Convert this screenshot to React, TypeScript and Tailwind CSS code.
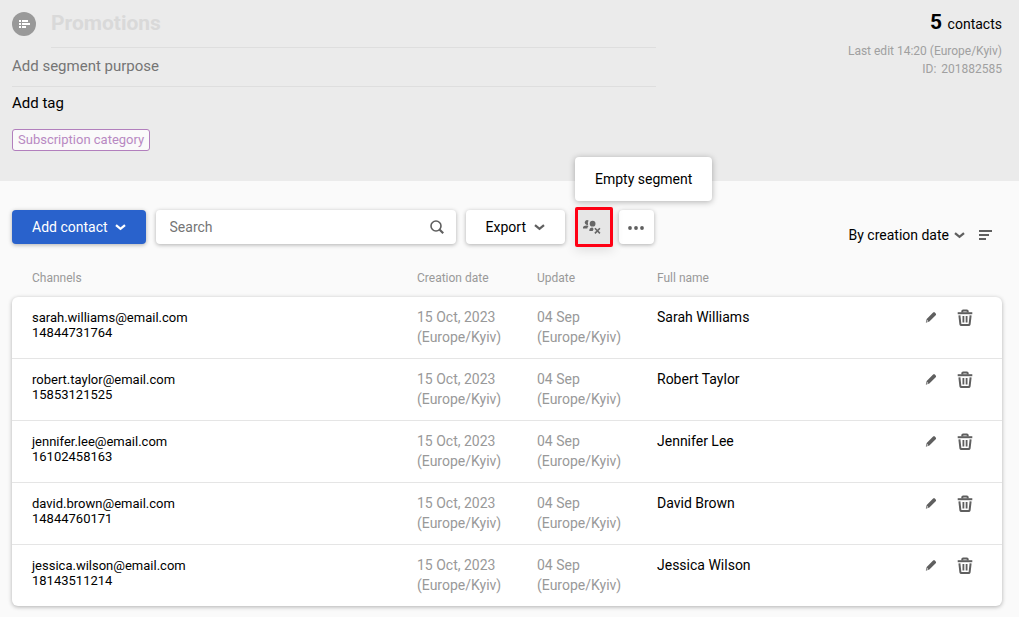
import React, { useState } from 'react';
import clsx from 'clsx';

interface Contact {
  id: number;
  email: string;
  phone: string;
  created: string;
  updated: string;
  name: string;
}

const contacts: Contact[] = [
  { id: 1, email: 'sarah.williams@email.com', phone: '14844731764', created: '15 Oct, 2023', updated: '04 Sep', name: 'Sarah Williams' },
  { id: 2, email: 'robert.taylor@email.com', phone: '15853121525', created: '15 Oct, 2023', updated: '04 Sep', name: 'Robert Taylor' },
  { id: 3, email: 'jennifer.lee@email.com', phone: '16102458163', created: '15 Oct, 2023', updated: '04 Sep', name: 'Jennifer Lee' },
  { id: 4, email: 'david.brown@email.com', phone: '14844760171', created: '15 Oct, 2023', updated: '04 Sep', name: 'David Brown' },
  { id: 5, email: 'jessica.wilson@email.com', phone: '18143511214', created: '15 Oct, 2023', updated: '04 Sep', name: 'Jessica Wilson' },
];

const ChevronIcon = () => (
  <svg viewBox="0 0 11 8" className="w-[11px] h-2" fill="none" stroke="currentColor" strokeWidth="2.3" aria-hidden="true">
    <path d="M1 2.2 L5.5 5.8 L10 2.2" />
  </svg>
);

const SegmentIcon = () => (
  <svg viewBox="0 0 24 24" className="w-6 h-6 shrink-0" aria-hidden="true">
    <circle cx="12" cy="12" r="12" fill="#999999" />
    <path fill="#fff" d="M7 8h2v2H7zM10 8h6v2h-6zM7 11h2v2H7zM10 11h8v2h-8zM7 14h2v2H7zM10 14h4v2h-4z" />
  </svg>
);

const SearchIcon = () => (
  <svg viewBox="0 0 14 14" className="w-3.5 h-3.5" fill="none" stroke="currentColor" aria-hidden="true">
    <circle cx="6" cy="6" r="5" strokeWidth="1.6" />
    <path d="M9.5 9.5 L13.2 13.2" strokeWidth="2.2" />
  </svg>
);

const EmptySegmentIcon = () => (
  <svg viewBox="0 0 18 16" className="w-[18px] h-4" fill="currentColor" aria-hidden="true">
    <path d="M5.6 1.6a2.4 2.4 0 1 0-.5 4.1 4.5 4.5 0 0 1 .5-4.1z" />
    <circle cx="9.6" cy="4.7" r="2.9" />
    <path d="M0 9.6V8.5C0 7.2 1.6 6.5 3.4 6.5c.8 0 1.5.1 2.1.4C4.7 7.6 4.4 8.5 4.3 9.6z" />
    <path d="M6.3 12v-.7c0-1.6 1.3-2.5 3.2-2.7l1.1 1.3-.9 2.1z" />
    <path d="M11.9 9.2l5 5.2M16.9 9.2l-5 5.2" stroke="currentColor" strokeWidth="1.6" />
  </svg>
);

const MoreIcon = () => (
  <svg viewBox="0 0 16 4" className="w-4 h-1" fill="currentColor" aria-hidden="true">
    <circle cx="2" cy="2" r="1.9" />
    <circle cx="8" cy="2" r="1.9" />
    <circle cx="14" cy="2" r="1.9" />
  </svg>
);

const SortIcon = () => (
  <svg viewBox="0 0 13 10" className="w-[13px] h-2.5" fill="currentColor" aria-hidden="true">
    <path d="M0 0h13v2H0zM0 4h10v2H0zM0 8h7v2H0z" />
  </svg>
);

const PencilIcon = () => (
  <svg viewBox="0 0 12 12" className="w-3 h-3" fill="currentColor" aria-hidden="true">
    <path d="M8.1 .6c.5-.5 1.300-.5 1.800 0l.8.800c.5.500.5 1.300 0 1.800L4.400 9.400 1.400 10.600c-.4.100-.7-.1-.5-.5L1.700 7z" />
    <path d="M2.100 8.100l1.100 1.100-1.300.500-.3-.3z" fill="#fff" />
  </svg>
);

const TrashIcon = () => (
  <svg viewBox="0 0 16 18" className="w-4 h-[18px]" fill="none" stroke="currentColor" aria-hidden="true">
    <path d="M5.3 3.6V2.2c0-.5.3-.8.8-.8h3.800c.5 0 .8.300.8.800v1.400" strokeWidth="2" />
    <path d="M.7 4.200h14.600" strokeWidth="2" />
    <path d="M2.400 6.300l1 9c.1.600.4.800 1 .8h7.200c.6 0 .9-.200 1-.8l1-9" strokeWidth="2" />
    <path d="M6.400 7v6.500M9.600 7v6.500" strokeWidth="1.800" />
  </svg>
);

const App: React.FC = () => {
  const [title, setTitle] = useState('Promotions');
  const [purpose, setPurpose] = useState('');
  const [search, setSearch] = useState('');

  const shadow = 'shadow-[0_1px_4px_rgba(0,0,0,0.3)]';
  const whiteButton = clsx('h-[34px] flex items-center justify-center rounded bg-white text-[#5f5f5f]', shadow);
  const rowGrid = 'grid grid-cols-[1fr_120px_120px_245px_120px]';
  const thClass = 'pl-5 pt-[23px] text-left text-xs leading-4 font-normal text-[#999999]';
  const tdClass = 'pl-5 pt-2.5';

  return (
    <div className="min-h-screen bg-[#fafafa] font-[Roboto,sans-serif] text-sm text-black">
      <header className="flex justify-between items-start bg-[#ebebeb] pl-3 pr-[17px] pb-[30px]">
        <div className="w-[65%]">
          <div className="flex items-center gap-[15px]">
            <SegmentIcon />
            <input
              type="text"
              aria-label="Segment name"
              value={title}
              onChange={(e) => setTitle(e.target.value)}
              className="h-12 min-w-0 flex-1 border-b border-[#dedede] bg-transparent pb-0.5 text-[21px] font-bold text-[#d9d9d9] outline-none"
            />
          </div>
          <input
            type="text"
            aria-label="Segment purpose"
            placeholder="Add segment purpose"
            value={purpose}
            onChange={(e) => setPurpose(e.target.value)}
            className="block h-[39px] w-full border-b border-[#dedede] bg-transparent pb-0.5 text-[15px] placeholder:text-[#757575] outline-none"
          />
          <button type="button" className="mt-1.5 block text-[15px] leading-5">Add tag</button>
          <button type="button" className="mt-4 block h-[22px] rounded-[3px] border border-[#b27fbd] bg-[#fafafa] px-[5px] text-[13px] leading-5 text-[#b889c2]">
            Subscription category
          </button>
        </div>

        <div className="pt-2.5 text-right">
          <p className="leading-6"><span className="mr-0.5 text-[21px] leading-6 font-bold">5</span> contacts</p>
          <p className="mt-1.5 text-xs leading-[18px] text-[#a0a0a0]">Last edit 14:20 (Europe/Kyiv)</p>
          <p className="text-xs leading-[18px] text-[#a0a0a0]">ID: <span className="ml-0.5">201882585</span></p>
        </div>
      </header>

      <main className="pl-3 pr-[17px]">
        <div className="flex items-center pt-[26px]">
          <button
            type="button"
            className={clsx('h-[34px] flex items-center gap-[7px] rounded bg-[#2962cc] px-5 text-white', shadow)}
          >
            Add contact <ChevronIcon />
          </button>

          <label className={clsx('ml-2.5 h-[34px] w-[300px] flex items-center rounded bg-white pl-3.5 pr-3 text-[#5f5f5f]', shadow)}>
            <input
              type="text"
              aria-label="Search"
              placeholder="Search"
              value={search}
              onChange={(e) => setSearch(e.target.value)}
              className="min-w-0 flex-1 bg-transparent text-black placeholder:text-[#757575] outline-none"
            />
            <SearchIcon />
          </label>

          <button type="button" className={clsx(whiteButton, 'ml-2.5 px-5 gap-2')}>
            <span className="text-black">Export</span> <ChevronIcon />
          </button>

          <div className="relative ml-2.5">
            <button
              type="button"
              aria-describedby="empty-tip"
              aria-label="Empty segment"
              className="h-10 w-[38px] flex items-center justify-center rounded-xs border-3 border-[#ff0014] bg-[#e6e6e6] pr-1 text-[#666666] shadow-[0_3px_12px_rgba(0,0,0,0.12)]"
            >
              <EmptySegmentIcon />
            </button>
            <div
              id="empty-tip"
              role="tooltip"
              className="absolute bottom-full left-0 mb-1.5 h-11 flex items-center rounded bg-white px-5 whitespace-nowrap shadow-[0_1px_6px_rgba(0,0,0,0.3)]"
            >
              Empty segment
            </div>
          </div>

          <button type="button" aria-label="More actions" className={clsx(whiteButton, 'ml-1.5 w-[35px] pt-0.5')}>
            <MoreIcon />
          </button>

          <div className="ml-auto flex items-center gap-3.5 pt-4 pr-2.5 text-[#5f5f5f]">
            <button type="button" className="flex items-center gap-[5px]">
              <span className="text-black">By creation date</span> <ChevronIcon />
            </button>
            <button type="button" aria-label="Sort order"><SortIcon /></button>
          </div>
        </div>

        <table className="block">
          <thead className="block">
            <tr className={clsx(rowGrid, 'h-[50px]')}>
              <th className={thClass}>Channels</th>
              <th className={thClass}>Creation date</th>
              <th className={thClass}>Update</th>
              <th className={thClass}>Full name</th>
              <th aria-label="Actions" />
            </tr>
          </thead>
          <tbody className={clsx('block rounded-md bg-white divide-y divide-[#e5e5e5]', shadow)}>
            {contacts.map((c) => (
              <tr key={c.id} className={clsx(rowGrid, 'h-[62px] last:h-[61px]')}>
                <td className={clsx(tdClass, 'text-[13px] leading-[15px]')}>
                  <div className="pt-[3px]">{c.email}</div>
                  <div>{c.phone}</div>
                </td>
                <td className={clsx(tdClass, 'text-[#999999]')}>{c.created}<br />(Europe/Kyiv)</td>
                <td className={clsx(tdClass, 'text-[#999999]')}>{c.updated}<br />(Europe/Kyiv)</td>
                <td className={tdClass}>{c.name}</td>
                <td className={clsx(tdClass, 'pr-[29px] text-[#5f5f5f]')}>
                  <div className="flex items-center justify-end gap-5 pt-0.5">
                    <button type="button" aria-label={`Edit ${c.name}`}><PencilIcon /></button>
                    <button type="button" aria-label={`Delete ${c.name}`}><TrashIcon /></button>
                  </div>
                </td>
              </tr>
            ))}
          </tbody>
        </table>
      </main>
    </div>
  );
};

export default App;
